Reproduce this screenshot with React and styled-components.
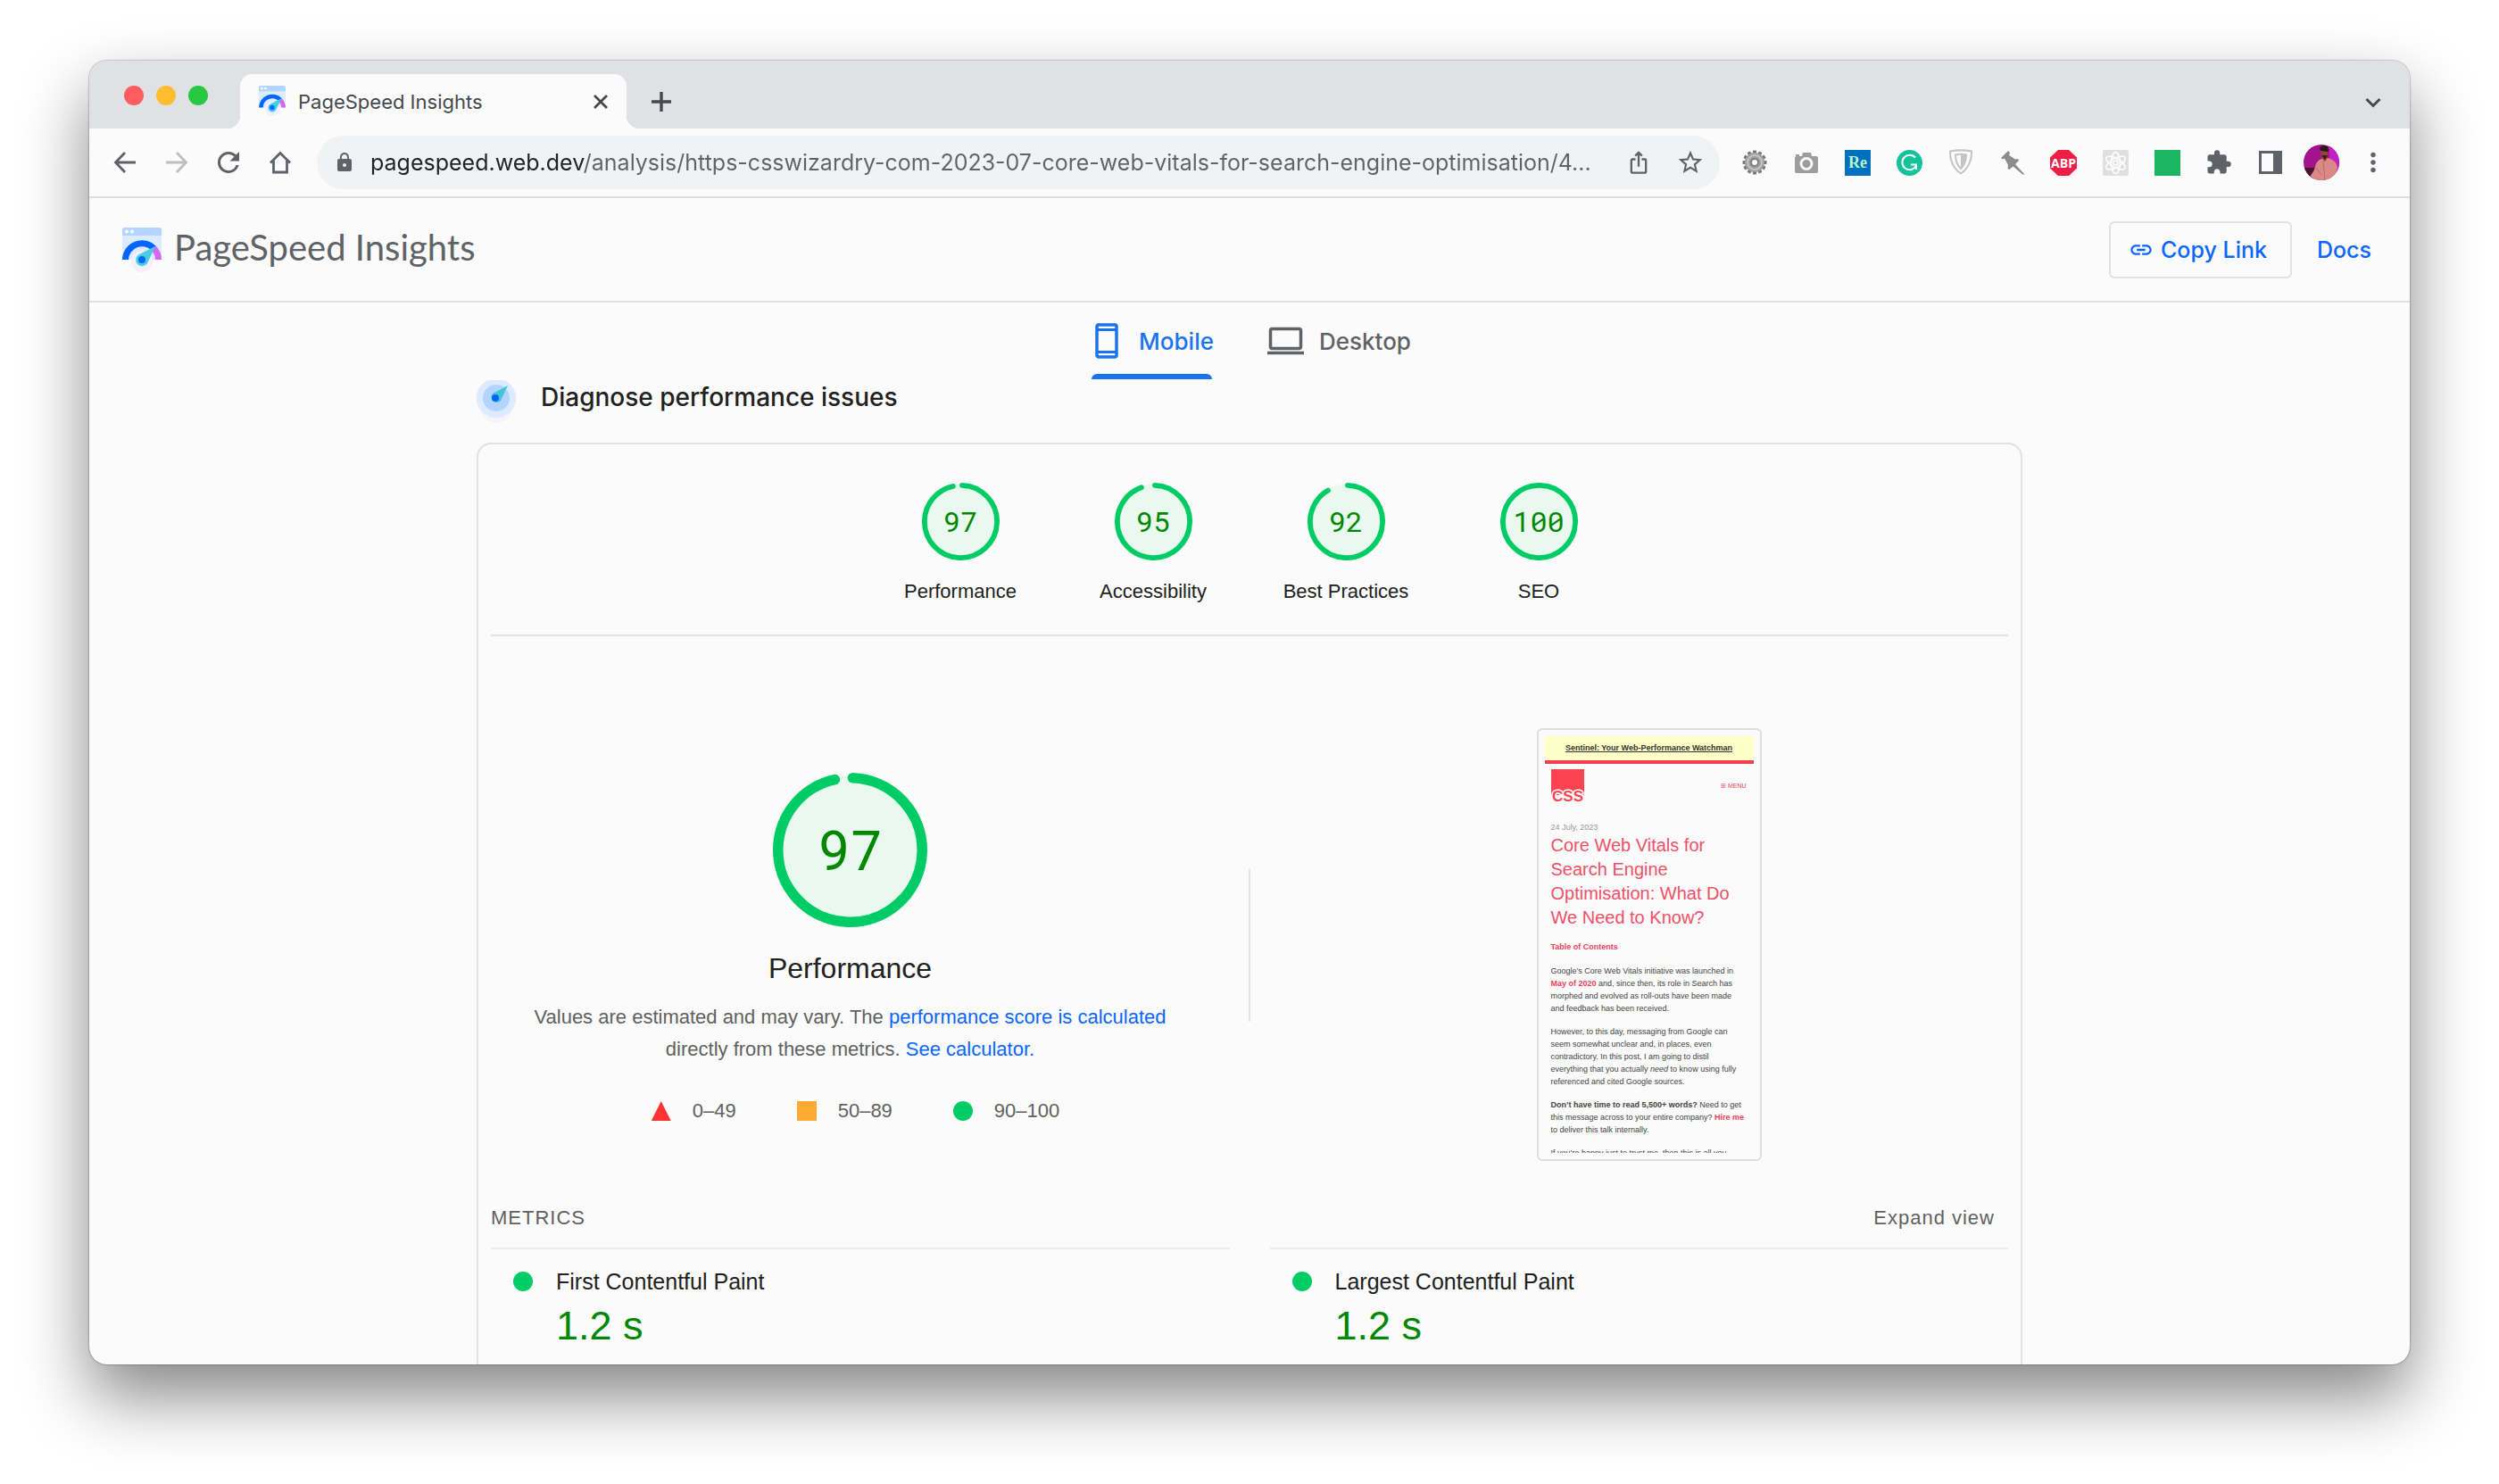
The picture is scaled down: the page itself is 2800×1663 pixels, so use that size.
import { useState } from 'react';
import styled, { createGlobalStyle } from 'styled-components';
import { MdExtension, MdIosShare, MdLink, MdLock, MdMoreVert, MdRefresh, MdStarBorder } from 'react-icons/md';

const GlobalStyle = createGlobalStyle`
    * {
        box-sizing: border-box;
    }
    body {
        margin: 0;
        background: #fff;
        font-family: 'Liberation Sans', Arial, sans-serif;
        color: #212121;
    }
    button,
    input {
        font: inherit;
        border: none;
        background: none;
        padding: 0;
        margin: 0;
    }
    button {
        cursor: pointer;
    }
    a {
        color: #0b66ff;
        text-decoration: none;
    }
    h1,
    h2,
    h3,
    p,
    dl,
    dd,
    ul {
        margin: 0;
        padding: 0;
        font-weight: 400;
    }
    svg {
        display: block;
    }
`;

const uiFont = `'Inter', sans-serif`;

/* ---------- icons ---------- */

const Line = ({ d, size = 28, width = 2.4, cap = 'butt' }) => (
    <svg
        width={size}
        height={size}
        viewBox="0 0 28 28"
        fill="none"
        stroke="currentColor"
        strokeWidth={width}
        strokeLinecap={cap}
        aria-hidden="true"
    >
        <path d={d} />
    </svg>
);

const SpeedLogo = ({ size }) => (
    <svg width={size} height={(size * 50) / 44} viewBox="0 0 44 50" aria-hidden="true">
        <path d="M3 0h38a3 3 0 0 1 3 3v33H0V3a3 3 0 0 1 3-3z" fill="#dcebff" />
        <path d="M3 0h38a3 3 0 0 1 3 3v6H0V3a3 3 0 0 1 3-3z" fill="#b3d4ff" />
        <circle cx="5" cy="4.500" r="2" fill="#fff" />
        <circle cx="11" cy="4.500" r="2" fill="#fff" />
        <circle cx="22" cy="38" r="12" fill="#f3efff" />
        <path d="M3.500 36a18.500 18.500 0 0 1 32-12.500" fill="none" stroke="#0565ff" strokeWidth="7" />
        <path d="M35.500 23.500a18.500 18.500 0 0 1 5 12.500" fill="none" stroke="#d469ef" strokeWidth="7" />
        <path d="M37 21L29 38a7 7 0 1 1-10-8z" fill="#45d0e0" />
        <circle cx="22" cy="36" r="4" fill="#0565ff" />
    </svg>
);

const CompassIcon = () => (
    <svg width="44" height="48" viewBox="0 2 44 48" aria-hidden="true">
        <circle cx="22" cy="32" r="18" fill="#f6f3ff" />
        <circle cx="22" cy="22" r="22" fill="#dcebff" />
        <circle cx="22" cy="22" r="15" fill="#b3d4ff" />
        <path d="M35 8L27 25a6 6 0 1 1-9-8z" fill="#45c5d8" />
        <circle cx="21" cy="22" r="4" fill="#0565ff" />
    </svg>
);

const GearIcon = () => (
    <svg width="28" height="28" viewBox="0 0 28 28" aria-hidden="true">
        {[0, 30, 60, 90, 120, 150].map((deg) => (
            <rect key={deg} x="12" y="0.500" width="4" height="27" rx="1" fill="#777" transform={`rotate(${deg} 14 14)`} />
        ))}
        <circle cx="14" cy="14" r="11" fill="#a0a0a0" />
        <circle cx="14" cy="14" r="8" fill="none" stroke="#c4c4c4" strokeWidth="2" />
        <circle cx="14" cy="14" r="5" fill="#808080" />
        <circle cx="14" cy="14" r="3" fill="#fafbfa" />
    </svg>
);

const CameraIcon = () => (
    <svg width="28" height="28" viewBox="0 0 28 28" aria-hidden="true">
        <path d="M2 5h4v2H2z" fill="#9d9d9d" />
        <path d="M3 7h6l1-4h9l1 4h5a2 2 0 0 1 2 2v15a2 2 0 0 1-2 2H3a2 2 0 0 1-2-2V9a2 2 0 0 1 2-2z" fill="#9d9d9d" />
        <circle cx="14" cy="15.500" r="6" fill="none" stroke="#fafbfa" strokeWidth="3" />
    </svg>
);

const GrammarIcon = () => (
    <svg width="29" height="29" viewBox="0 0 29 29" fill="none" aria-hidden="true">
        <circle cx="14.500" cy="14.500" r="14.500" fill="#15c39a" />
        <path d="M21 8.500A8.300 8.300 0 1 0 22 18" stroke="#fff" strokeWidth="2" />
        <path d="M16 16.500h6V22" stroke="#fff" strokeWidth="2" />
    </svg>
);

const ShieldIcon = () => (
    <svg width="28" height="30" viewBox="0 0 28 30" fill="none" stroke="#c4c4c4" strokeWidth="2" aria-hidden="true">
        <path d="M2 2.500c8-1.500 16-1.500 24 0 .5 9-3 19-12 25C5 21.500 1.500 11.500 2 2.500z" />
        <path d="M8 6.500c4-1 8-1 12 0 0 6-1.500 11-6 15.500C9.500 17.500 8 12.500 8 6.500z" />
        <path d="M14 6c2-.2 4 0 6 .5 0 6-1.500 11-6 15.500z" fill="#c4c4c4" stroke="none" />
    </svg>
);

const PinIcon = () => (
    <svg width="28" height="28" viewBox="0 0 28 28" fill="#8c8c8c" aria-hidden="true">
        <path d="M9 1l2 2-1 3 7 4.500 3-.5 1 2-4 4 10 11-1 1-11.500-9.500-4 3.500-2-1 .5-4L5 9.500 3 10.500 1 9z" />
    </svg>
);

const AdblockIcon = () => (
    <svg width="30" height="29" viewBox="0 0 30 29" aria-hidden="true">
        <path d="M9 0h12l9 8.500v12L21 29H9l-9-8.500v-12z" fill="#ed1e45" />
        <text x="15" y="20" fill="#fff" fontFamily="Open Sans, sans-serif" fontSize="14" fontWeight="700" textAnchor="middle">
            ABP
        </text>
    </svg>
);

const AtomIcon = () => (
    <svg width="29" height="29" viewBox="0 0 29 29" fill="none" stroke="#fff" strokeWidth="1.500" aria-hidden="true">
        <rect width="29" height="29" rx="2" fill="#dfdfdf" stroke="none" />
        {[0, 60, 120].map((deg) => (
            <ellipse key={deg} cx="14.500" cy="14.500" rx="12" ry="5" transform={`rotate(${deg + 30} 14.500 14.500)`} />
        ))}
        <circle cx="14.500" cy="14.500" r="2.500" />
    </svg>
);

const SidePanelIcon = () => (
    <svg width="26" height="26" viewBox="0 0 26 26" aria-hidden="true">
        <rect x="1.500" y="1.500" width="23" height="23" fill="none" stroke="#5f6368" strokeWidth="3" />
        <path d="M16 1h9v24h-9z" fill="#5f6368" />
    </svg>
);

const Avatar = () => (
    <svg width="40" height="40" viewBox="0 0 40 40" aria-hidden="true">
        <defs>
            <clipPath id="face">
                <circle cx="20" cy="20" r="20" />
            </clipPath>
        </defs>
        <g clipPath="url(#face)">
            <path d="M0 0h40v40H0z" fill="#a3128f" />
            <path d="M28 0h12v30H30z" fill="#c41fc4" />
            <path d="M0 26h12v14H0z" fill="#4a1430" />
            <path d="M7 40c0-7 5-9 6-15 1-5 3-7 7-9l7-1c7 2 11 6 11 12l-5 13z" fill="#d98a86" />
            <path d="M19 6h8v9l-3 4-4-4z" fill="#8a4a3c" />
            <path d="M18 4c2-4 9-4 10 1v3l-9-1z" fill="#2d1512" />
            <path d="M20 12h7l-3 5z" fill="#3a1a18" />
            <path d="M22 18l2 22M14 26l6 8" stroke="#b86c6c" strokeWidth="1" />
        </g>
    </svg>
);

const PhoneIcon = () => (
    <svg width="32" height="40" viewBox="0 0 32 40" fill="none" stroke="currentColor" strokeWidth="3.500" aria-hidden="true">
        <rect x="2" y="2" width="22" height="36" rx="2" />
        <path d="M2 7.500h22M2 32.500h22" strokeWidth="3" />
    </svg>
);

const LaptopIcon = () => (
    <svg width="41" height="32" viewBox="0 0 41 32" fill="none" stroke="currentColor" strokeWidth="3.500" aria-hidden="true">
        <rect x="3.500" y="2.500" width="34" height="22" rx="2" />
        <path d="M0 29.500h41" />
    </svg>
);

/* ---------- browser chrome ---------- */

const Desk = styled.div`
    height: 100vh;
    padding: 68px 100px 134px;
`;

const Window = styled.div`
    height: 100%;
    display: flex;
    flex-direction: column;
    overflow: hidden;
    border-radius: 20px;
    background: #fafbfa;
    box-shadow:
        0 0 2px rgba(0, 0, 0, 0.6),
        0 36px 76px rgba(0, 0, 0, 0.48);
`;

const TabStrip = styled.div`
    flex: none;
    display: flex;
    align-items: flex-end;
    height: 76px;
    padding-right: 24px;
    background: #dfe1e5;
    color: #45484c;
`;

const Lights = styled.div`
    align-self: flex-start;
    display: flex;
    gap: 14px;
    padding: 28px 36px 0 39px;
`;

const Light = styled.button`
    width: 22px;
    height: 22px;
    border-radius: 50%;
    background: ${(props) => props.$color};
`;

const BrowserTab = styled.div`
    position: relative;
    display: flex;
    align-items: center;
    width: 433px;
    height: 61px;
    padding: 0 12px 0 21px;
    border-radius: 14px 14px 0 0;
    background: #fafbfa;
    font-family: ${uiFont};
    font-size: 22px;
    &::before,
    &::after {
        content: '';
        position: absolute;
        bottom: 0;
        width: 14px;
        height: 14px;
    }
    &::before {
        right: 100%;
        background: radial-gradient(circle at 0 0, transparent 14px, #fafbfa 14px);
    }
    &::after {
        left: 100%;
        background: radial-gradient(circle at 100% 0, transparent 14px, #fafbfa 14px);
    }
`;

const TabTitle = styled.span`
    flex: 1;
    padding-left: 14px;
`;

const StripButton = styled.button`
    display: grid;
    place-items: center;
    width: 34px;
    height: 60px;
    margin-left: ${(props) => (props.$push ? 'auto' : '0')};
    color: inherit;
`;

const NewTab = styled(StripButton)`
    width: 78px;
`;

const Toolbar = styled.div`
    flex: none;
    display: flex;
    align-items: center;
    height: 78px;
    padding: 0 12px 0 11px;
    border-bottom: 2px solid #dcdfe1;
    color: #5f6368;
`;

const ToolButton = styled.button`
    display: grid;
    place-items: center;
    flex: none;
    width: 58px;
    height: 58px;
    color: inherit;
    &:disabled {
        color: #bcbec1;
    }
`;

const AddressBar = styled.form`
    flex: 1;
    display: flex;
    align-items: center;
    height: 60px;
    margin: 0 10px 0 12px;
    padding: 0 4px 0 19px;
    border-radius: 30px;
    background: #f0f2f4;
`;

/* host name dark, the rest of the url grey */
const Url = styled.input`
    flex: 1;
    min-width: 0;
    height: 40px;
    margin-left: 17px;
    outline: none;
    font-family: ${uiFont};
    font-size: 25px;
    background: linear-gradient(90deg, #202124 240px, #5f6368 240px);
    background-clip: text;
    -webkit-text-fill-color: transparent;
`;

const Extensions = styled.div`
    flex: 0 0 751px;
    display: flex;
    ${ToolButton} {
        flex: 1;
        width: auto;
    }
`;

const Badge = styled.span`
    display: grid;
    place-items: center;
    width: 29px;
    height: 29px;
    background: ${(props) => props.$color};
    color: #b9f5c8;
    font: 700 18px/29px 'Liberation Serif', serif;
`;

/* ---------- page ---------- */

const Header = styled.header`
    flex: none;
    display: flex;
    align-items: center;
    height: 117px;
    padding: 0 43px 0 37px;
    border-bottom: 2px solid #dfe1e5;
    font-family: ${uiFont};
`;

const Brand = styled.h1`
    flex: 1;
    display: flex;
    align-items: flex-start;
    gap: 14px;
    font-family: 'Google Sans', 'Lato', sans-serif;
    font-size: 40px;
    line-height: 44px;
    color: #5f6368;
`;

const CopyButton = styled.button`
    display: flex;
    align-items: center;
    gap: 8px;
    height: 64px;
    padding: 0 26px 0 20px;
    margin-right: 28px;
    border: 2px solid #dfe1e5;
    border-radius: 6px;
    color: #0b66ff;
    font-size: 25px;
    font-weight: 500;
`;

const DocsLink = styled.a`
    font-size: 25px;
    font-weight: 500;
`;

const Tabs = styled.div`
    flex: none;
    display: flex;
    justify-content: center;
    gap: 52px;
    height: 87px;
    padding-left: 8px;
`;

const Tab = styled.button`
    position: relative;
    display: flex;
    align-items: center;
    gap: 17px;
    padding: 0 4px;
    height: 86px;
    color: ${(props) => (props.$active ? '#1a73f0' : '#5f6368')};
    font-family: ${uiFont};
    font-size: 26px;
    font-weight: 500;
    &::after {
        content: '';
        display: ${(props) => (props.$active ? 'block' : 'none')};
        position: absolute;
        left: 0;
        right: 6px;
        bottom: 0;
        height: 6px;
        border-radius: 6px 6px 0 0;
        background: #1a73f0;
    }
`;

const Report = styled.main`
    width: 100%;
    max-width: 1732px;
    margin: 0 auto;
`;

const SectionTitle = styled.h2`
    display: flex;
    gap: 28px;
    height: 70px;
    font-family: ${uiFont};
    font-size: 28px;
    font-weight: 500;
    line-height: 38px;
`;

const Card = styled.section`
    padding: 43px 14px;
    border: 2px solid #dfe1e3;
    border-radius: 16px;
`;

const Scores = styled.div`
    display: grid;
    grid-template-columns: repeat(4, 216px);
    justify-content: center;
    padding-bottom: 36px;
    border-bottom: 2px solid #e3e4e4;
`;

const Score = styled.a`
    display: flex;
    flex-direction: column;
    align-items: center;
    gap: 23px;
    color: #212121;
    font-size: 22px;
    line-height: 24px;
`;

const Dial = styled.div`
    display: grid;
    place-items: center;
    width: ${(props) => (props.$big ? 173 : 87)}px;
    height: ${(props) => (props.$big ? 173 : 87)}px;
    font-family: 'Roboto Mono', 'Roboto', sans-serif;
    font-variant-numeric: slashed-zero;
    font-size: ${(props) => (props.$big ? 61 : 32)}px;
    line-height: 1;
    color: #080;
    > * {
        grid-area: 1 / 1;
    }
    span {
        padding-bottom: 2px;
    }
`;

const Overview = styled.div`
    display: grid;
    grid-template-columns: 1fr 2px 1fr;
    gap: 44px;
    padding: 103px 0 52px;
`;

const Summary = styled.div`
    display: flex;
    flex-direction: column;
    align-items: center;
    padding-top: 50px;
    color: #616161;
    font-size: 22px;
    h2 {
        margin: 26px 0 17px;
        color: #212121;
        font-size: 32px;
        line-height: 40px;
    }
    p {
        max-width: 720px;
        line-height: 36px;
        text-align: center;
    }
`;

const Divider = styled.div`
    align-self: center;
    height: 172px;
    background: #e3e4e4;
`;

const Legend = styled.ul`
    display: flex;
    gap: 68px;
    margin-top: 39px;
    padding-left: 12px;
    list-style: none;
    line-height: 24px;
`;

const LegendItem = styled.li`
    display: flex;
    align-items: center;
    gap: 24px;
`;

const Mark = styled.span`
    flex: none;
    width: 22px;
    height: 22px;
    background: ${(props) => props.$color};
    border-radius: ${(props) => (props.$shape === 'circle' ? '50%' : '0')};
    clip-path: ${(props) => (props.$shape === 'triangle' ? 'polygon(50% 0, 100% 100%, 0 100%)' : 'none')};
`;

const MetricsHead = styled.div`
    display: flex;
    justify-content: space-between;
    padding: 0 15px 21px 0;
    color: #616161;
    font-size: 22px;
    line-height: 24px;
    letter-spacing: 1px;
    h2 {
        font-size: inherit;
    }
    button {
        color: inherit;
        letter-spacing: inherit;
    }
`;

const Metrics = styled.dl`
    display: grid;
    grid-template-columns: 1fr 1fr;
    gap: 45px;
`;

const Metric = styled.div`
    padding: 21px 25px;
    border-top: 2px solid #ebecec;
    dt {
        display: flex;
        align-items: center;
        gap: 26px;
        font-size: 25px;
        line-height: 30px;
    }
    dd {
        padding: 10px 0 0 48px;
        color: #080;
        font-size: 45px;
        line-height: 50px;
    }
`;

/* ---------- mobile screenshot ---------- */

const Phone = styled.div`
    justify-self: center;
    width: 252px;
    height: 485px;
    padding: 7px;
    border: 2px solid #dcdfe1;
    border-radius: 6px;
`;

const Screen = styled.div`
    height: 467px;
    overflow: hidden;
    color: #444;
    font-size: 9px;
    line-height: 14px;
    white-space: nowrap;
    a,
    h3 {
        color: #ef4060;
        font-weight: 700;
    }
    h2 {
        margin-bottom: 12px;
        color: #ef5068;
        font-size: 20px;
        line-height: 27px;
    }
    h3 {
        margin-bottom: 13px;
        font-size: 9px;
    }
    p {
        margin-bottom: 12px;
    }
`;

const Banner = styled.div`
    height: 31px;
    border-bottom: 4px solid #f43f54;
    background: #ffffc8;
    color: #333;
    font-size: 9px;
    font-weight: 700;
    line-height: 27px;
    text-align: center;
    text-decoration: underline;
`;

const Masthead = styled.div`
    display: flex;
    align-items: center;
    justify-content: space-between;
    padding: 6px 8px 0 7px;
`;

const Menu = styled.span`
    color: #ef4060;
    font-size: 7px;
`;

const Article = styled.div`
    padding: 21px 7px 0;
    time {
        display: block;
        color: #999;
    }
`;

const CssLogo = () => (
    <svg width="37" height="37" viewBox="0 0 37 37" role="img" aria-label="CSS Wizardry">
        <path d="M0 0h37v29H0z" fill="#fb4352" />
        <text
            x="18.500"
            y="36"
            fill="#fb4352"
            stroke="#fafbfa"
            strokeWidth="3"
            paintOrder="stroke"
            fontFamily="Liberation Sans, sans-serif"
            fontSize="17"
            fontWeight="700"
            textAnchor="middle"
        >
            CSS
        </text>
    </svg>
);

const scores = [
    { label: 'Performance', value: 97 },
    { label: 'Accessibility', value: 95 },
    { label: 'Best Practices', value: 92 },
    { label: 'SEO', value: 100 },
];

const metrics = [
    { label: 'First Contentful Paint', value: '1.2 s' },
    { label: 'Largest Contentful Paint', value: '1.2 s' },
];

const extensions = [
    { name: 'Settings', icon: <GearIcon /> },
    { name: 'Screenshot', icon: <CameraIcon /> },
    { name: 'Re', icon: <Badge $color="#0070c0">Re</Badge> },
    { name: 'Grammar', icon: <GrammarIcon /> },
    { name: 'Shield', icon: <ShieldIcon /> },
    { name: 'Pin', icon: <PinIcon /> },
    { name: 'Adblock', icon: <AdblockIcon /> },
    { name: 'Developer tools', icon: <AtomIcon /> },
    { name: 'Status', icon: <Badge $color="#1cb663" /> },
    { name: 'Extensions', icon: <MdExtension size={30} /> },
    { name: 'Side panel', icon: <SidePanelIcon /> },
    { name: 'Profile', icon: <Avatar /> },
    { name: 'Menu', icon: <MdMoreVert size={34} /> },
];

const Gauge = ({ value, big }) => {
    const length = 2 * Math.PI * 56;
    const arc = value === 100 ? length : (value / 100) * length - 4;
    return (
        <Dial $big={big}>
            <svg width="100%" height="100%" viewBox="0 0 120 120" aria-hidden="true">
                <circle cx="60" cy="60" r="58" fill="#e9f9ef" />
                <circle
                    cx="60"
                    cy="60"
                    r="56"
                    fill="none"
                    stroke="#0c6"
                    strokeWidth="8"
                    strokeLinecap="round"
                    strokeDasharray={`${arc} ${length}`}
                    transform="rotate(-87.95 60 60)"
                />
            </svg>
            <span>{value}</span>
        </Dial>
    );
};

const Browser = () => (
    <>
        <TabStrip>
            <Lights>
                <Light $color="#ff5c60" aria-label="Close window" />
                <Light $color="#ffbd2e" aria-label="Minimise window" />
                <Light $color="#28c840" aria-label="Zoom window" />
            </Lights>
            <BrowserTab>
                <SpeedLogo size={30} />
                <TabTitle>PageSpeed Insights</TabTitle>
                <StripButton aria-label="Close tab">
                    <Line d="M7 7l14 14M21 7L7 21" width={2.8} />
                </StripButton>
            </BrowserTab>
            <NewTab aria-label="New tab">
                <Line d="M14 3v22M3 14h22" width={3.4} />
            </NewTab>
            <StripButton $push aria-label="Search tabs">
                <Line d="M6.500 11l7.500 7.500 7.500-7.500" width={3} />
            </StripButton>
        </TabStrip>
        <Toolbar>
            <ToolButton aria-label="Back">
                <Line d="M26 14H4M14 3L3.500 14 14 25" width={2.8} />
            </ToolButton>
            <ToolButton aria-label="Forward" disabled>
                <Line d="M2 14h22M14 3l10.500 11L14 25" width={2.8} />
            </ToolButton>
            <ToolButton aria-label="Reload">
                <MdRefresh size={36} />
            </ToolButton>
            <ToolButton aria-label="Home">
                <Line d="M3 14.500L14 3.500l11 11M6.500 12v13h15V12" width={2.8} />
            </ToolButton>
            <AddressBar onSubmit={(e) => e.preventDefault()}>
                <MdLock size={24} />
                <Url
                    aria-label="Address"
                    defaultValue="pagespeed.web.dev/analysis/https-csswizardry-com-2023-07-core-web-vitals-for-search-engine-optimisation/4..."
                />
                <ToolButton type="button" aria-label="Share">
                    <MdIosShare size={28} />
                </ToolButton>
                <ToolButton type="button" aria-label="Bookmark">
                    <MdStarBorder size={32} />
                </ToolButton>
            </AddressBar>
            <Extensions>
                {extensions.map((item) => (
                    <ToolButton key={item.name} aria-label={item.name}>
                        {item.icon}
                    </ToolButton>
                ))}
            </Extensions>
        </Toolbar>
    </>
);

const PhonePreview = () => (
    <Phone>
        <Screen>
            <Banner>Sentinel: Your Web-Performance Watchman</Banner>
            <Masthead>
                <CssLogo />
                <Menu>⊞ MENU</Menu>
            </Masthead>
            <Article>
                <time>24 July, 2023</time>
                <h2>
                    Core Web Vitals for
                    <br />
                    Search Engine
                    <br />
                    Optimisation: What Do
                    <br />
                    We Need to Know?
                </h2>
                <h3>Table of Contents</h3>
                <p>
                    Google’s Core Web Vitals initiative was launched in
                    <br />
                    <a href="#may">May of 2020</a> and, since then, its role in Search has
                    <br />
                    morphed and evolved as roll-outs have been made
                    <br />
                    and feedback has been received.
                </p>
                <p>
                    However, to this day, messaging from Google can
                    <br />
                    seem somewhat unclear and, in places, even
                    <br />
                    contradictory. In this post, I am going to distil
                    <br />
                    everything that you actually <em>need</em> to know using fully
                    <br />
                    referenced and cited Google sources.
                </p>
                <p>
                    <b>Don’t have time to read 5,500+ words?</b> Need to get
                    <br />
                    this message across to your entire company? <a href="#hire">Hire me</a>
                    <br />
                    to deliver this talk internally.
                </p>
                <p>If you’re happy just to trust me, then this is all you</p>
            </Article>
        </Screen>
    </Phone>
);

const App = () => {
    const [device, setDevice] = useState('mobile');

    return (
        <Desk>
            <GlobalStyle />
            <Window>
                <Browser />
                <Header>
                    <Brand>
                        <SpeedLogo size={44} />
                        PageSpeed Insights
                    </Brand>
                    <CopyButton>
                        <MdLink size={28} />
                        Copy Link
                    </CopyButton>
                    <DocsLink href="#docs">Docs</DocsLink>
                </Header>
                <Tabs>
                    <Tab $active={device === 'mobile'} onClick={() => setDevice('mobile')}>
                        <PhoneIcon />
                        Mobile
                    </Tab>
                    <Tab $active={device === 'desktop'} onClick={() => setDevice('desktop')}>
                        <LaptopIcon />
                        Desktop
                    </Tab>
                </Tabs>
                <Report>
                    <SectionTitle>
                        <CompassIcon />
                        Diagnose performance issues
                    </SectionTitle>
                    <Card>
                        <Scores>
                            {scores.map((score) => (
                                <Score key={score.label} href={`#${score.label}`}>
                                    <Gauge value={score.value} />
                                    {score.label}
                                </Score>
                            ))}
                        </Scores>
                        <Overview>
                            <Summary>
                                <Gauge value={97} big />
                                <h2>Performance</h2>
                                <p>
                                    Values are estimated and may vary. The <a href="#score">performance score is calculated</a> directly from
                                    these metrics. <a href="#calculator">See calculator.</a>
                                </p>
                                <Legend>
                                    <LegendItem>
                                        <Mark $color="#f33" $shape="triangle" />
                                        0–49
                                    </LegendItem>
                                    <LegendItem>
                                        <Mark $color="#fa3" $shape="square" />
                                        50–89
                                    </LegendItem>
                                    <LegendItem>
                                        <Mark $color="#0c6" $shape="circle" />
                                        90–100
                                    </LegendItem>
                                </Legend>
                            </Summary>
                            <Divider />
                            <PhonePreview />
                        </Overview>
                        <MetricsHead>
                            <h2>METRICS</h2>
                            <button>Expand view</button>
                        </MetricsHead>
                        <Metrics>
                            {metrics.map((metric) => (
                                <Metric key={metric.label}>
                                    <dt>
                                        <Mark $color="#0c6" $shape="circle" />
                                        {metric.label}
                                    </dt>
                                    <dd>{metric.value}</dd>
                                </Metric>
                            ))}
                        </Metrics>
                    </Card>
                </Report>
            </Window>
        </Desk>
    );
};

export default App;
